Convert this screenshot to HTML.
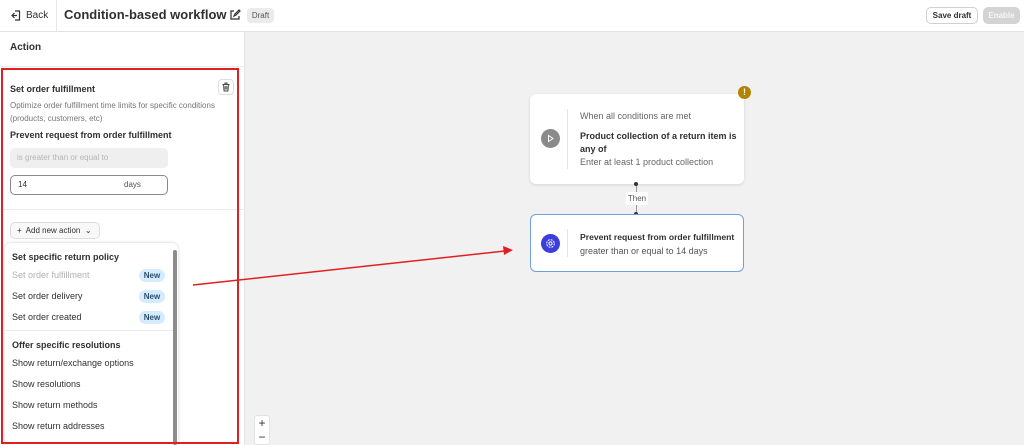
<!DOCTYPE html>
<html><head><meta charset="utf-8"><style>
*{box-sizing:border-box;margin:0;padding:0}
body{width:1024px;height:445px;overflow:hidden;font-family:"Liberation Sans",sans-serif;background:#f1f1f1;position:relative;color:#303030}
.abs{position:absolute}
.t{font-size:9px;white-space:nowrap}
.b{font-weight:bold}
.badge{position:absolute;left:139px;width:26px;height:13px;border-radius:7px;background:#d5ebff;color:#2c4f6e;font-size:8px;font-weight:bold;text-align:center;line-height:13px}
</style></head><body>
<!-- header -->
<div class="abs" style="left:0;top:0;width:1024px;height:32px;background:#fff;border-bottom:1px solid #e3e3e3"></div>
<div class="abs" style="left:56px;top:0;width:1px;height:31px;background:#e8e8e8"></div>
<svg class="abs" style="left:11px;top:10px" width="10" height="11" viewBox="0 0 10 11"><path d="M4 1h4.5v9H4M1 5.5h5M3.5 3L1 5.5 3.5 8" fill="none" stroke="#303030" stroke-width="1.2"/></svg>
<div class="abs t" style="left:26px;top:10px;font-size:10px">Back</div>
<div class="abs b" style="left:64px;top:7px;font-size:13px;white-space:nowrap">Condition-based workflow</div>
<svg class="abs" style="left:229px;top:9px" width="12" height="12" viewBox="0 0 12 12"><path d="M5 2H2v8h8V7M5 7l1-2 4-4 1 1-4 4z" fill="none" stroke="#303030" stroke-width="1.2"/></svg>
<div class="abs" style="left:247px;top:8px;width:27px;height:15px;background:#ebebeb;border-radius:4px;font-size:8px;text-align:center;line-height:15px;color:#555">Draft</div>
<div class="abs" style="left:926px;top:7px;width:52px;height:17px;border:1px solid #d0d0d0;border-radius:5px;background:#fff;font-size:8px;text-align:center;line-height:15px;font-weight:bold">Save draft</div>
<div class="abs" style="left:983px;top:7px;width:37px;height:17px;border-radius:5px;background:#d4d4d4;color:#f6f6f6;font-size:8px;text-align:center;line-height:17px;font-weight:bold">Enable</div>
<!-- left panel -->
<div class="abs" style="left:0;top:32px;width:245px;height:413px;background:#fff;border-right:1px solid #e3e3e3"></div>
<div class="abs t b" style="left:10px;top:42px;font-size:10px">Action</div>
<div class="abs" style="left:0;top:66px;width:245px;height:1px;background:#ebebeb"></div>
<div class="abs t b" style="left:10px;top:84px">Set order fulfillment</div>
<div class="abs" style="left:218px;top:79px;width:16px;height:16px;border:1px solid #ddd;border-radius:4px;background:#fff"></div>
<svg class="abs" style="left:221px;top:82px" width="10" height="10" viewBox="0 0 10 10"><path d="M1.5 2.5h7M4 2.5V1h2v1.5M2.5 2.5l.6 6.5h3.8l.6-6.5M4.2 4v3.5M5.8 4v3.5" fill="none" stroke="#444" stroke-width="1"/></svg>
<div class="abs" style="left:10px;top:99px;font-size:8px;color:#777;line-height:13px;width:220px">Optimize order fulfillment time limits for specific conditions (products, customers, etc)</div>
<div class="abs t b" style="left:10px;top:130px">Prevent request from order fulfillment</div>
<div class="abs" style="left:10px;top:148px;width:158px;height:20px;border-radius:5px;background:#efefef;font-size:8px;color:#b5b5b5;line-height:20px;padding-left:7px">is greater than or equal to</div>
<div class="abs" style="left:10px;top:175px;width:158px;height:20px;border-radius:5px;border:1px solid #8a8a8a;background:#fff;font-size:8px;line-height:18px;padding-left:7px">14<span style="position:absolute;left:113px;color:#555">days</span></div>
<div class="abs" style="left:0;top:209px;width:245px;height:1px;background:#ebebeb"></div>
<div class="abs" style="left:10px;top:222px;width:90px;height:17px;border:1px solid #ddd;border-radius:5px;background:#f8f8f8;font-size:8px;line-height:15px;padding-left:6px;white-space:nowrap">+&nbsp; Add new action &nbsp;⌄</div>
<!-- dropdown -->
<div class="abs" style="left:5px;top:243px;width:173px;height:202px;background:#fff;border-radius:6px;box-shadow:0 0 3px rgba(0,0,0,.2)"></div>
<div class="abs" style="left:173px;top:250px;width:4px;height:195px;background:#8c8c8c;border-radius:2px"></div>
<div class="abs t b" style="left:12px;top:252px">Set specific return policy</div>
<div class="abs t" style="left:12px;top:270px;color:#b0b0b0">Set order fulfillment</div>
<div class="badge" style="top:269px">New</div>
<div class="abs t" style="left:12px;top:291px">Set order delivery</div>
<div class="badge" style="top:290px">New</div>
<div class="abs t" style="left:12px;top:312px">Set order created</div>
<div class="badge" style="top:311px">New</div>
<div class="abs" style="left:5px;top:330px;width:168px;height:1px;background:#ebebeb"></div>
<div class="abs t b" style="left:12px;top:340px">Offer specific resolutions</div>
<div class="abs t" style="left:12px;top:358px">Show return/exchange options</div>
<div class="abs t" style="left:12px;top:379px">Show resolutions</div>
<div class="abs t" style="left:12px;top:400px">Show return methods</div>
<div class="abs t" style="left:12px;top:421px">Show return addresses</div>
<!-- red box -->
<div class="abs" style="left:1px;top:68px;width:238px;height:376px;border:2px solid #e02020"></div>
<!-- zoom controls -->
<div class="abs" style="left:254px;top:415px;width:16px;height:30px;background:#fff;border:1px solid #e3e3e3;border-radius:3px;font-size:12px;text-align:center;line-height:14px">+<br>−</div>
<!-- cards -->
<div class="abs" style="left:530px;top:94px;width:214px;height:90px;background:#fff;border-radius:6px;box-shadow:0 1px 3px rgba(0,0,0,.12)"></div>
<div class="abs" style="left:567px;top:109px;width:1px;height:60px;background:#e3e3e3"></div>
<div class="abs" style="left:541px;top:129px;width:19px;height:19px;border-radius:50%;background:#8a8a8a"></div>
<svg class="abs" style="left:546px;top:134px" width="9" height="9" viewBox="0 0 9 9"><path d="M2.5 1.5l4.5 3-4.5 3z" fill="none" stroke="#fff" stroke-width="1"/></svg>
<div class="abs t" style="left:580px;top:111px;color:#666">When all conditions are met</div>
<div class="abs b" style="left:580px;top:130px;font-size:9px;line-height:13px;width:160px">Product collection of a return item is any of</div>
<div class="abs t" style="left:580px;top:157px;color:#666">Enter at least 1 product collection</div>
<div class="abs" style="left:738px;top:86px;width:13px;height:13px;border-radius:50%;background:#b28500;color:#fff;font-size:9px;font-weight:bold;text-align:center;line-height:13px">!</div>
<div class="abs" style="left:636px;top:184px;width:1px;height:30px;background:#999"></div>
<div class="abs" style="left:634px;top:182px;width:4px;height:4px;border-radius:50%;background:#333"></div>
<div class="abs" style="left:634px;top:212px;width:4px;height:4px;border-radius:50%;background:#333"></div>
<div class="abs" style="left:626px;top:192px;width:22px;height:13px;background:#fff;font-size:8px;text-align:center;line-height:13px;color:#555">Then</div>
<div class="abs" style="left:530px;top:214px;width:214px;height:58px;background:#fff;border-radius:6px;border:1px solid #6fa0e0"></div>
<div class="abs" style="left:567px;top:229px;width:1px;height:28px;background:#e3e3e3"></div>
<div class="abs" style="left:541px;top:234px;width:19px;height:19px;border-radius:50%;background:#3d3ddb"></div>
<svg class="abs" style="left:545px;top:238px" width="11" height="11" viewBox="0 0 11 11"><circle cx="5.5" cy="5.5" r="1.6" fill="none" stroke="#fff" stroke-width="1"/><circle cx="5.5" cy="5.5" r="3.8" fill="none" stroke="#fff" stroke-width="1" stroke-dasharray="2 1"/></svg>
<div class="abs t b" style="left:580px;top:232px;font-size:8.6px">Prevent request from order fulfillment</div>
<div class="abs t" style="left:580px;top:246px;color:#555">greater than or equal to 14 days</div>
<!-- arrow -->
<svg class="abs" style="left:0;top:0" width="1024" height="445"><line x1="193" y1="285" x2="505" y2="251" stroke="#e02020" stroke-width="1.5"/><path d="M513 250l-10-4 1 9z" fill="#e02020"/></svg>
</body></html>
